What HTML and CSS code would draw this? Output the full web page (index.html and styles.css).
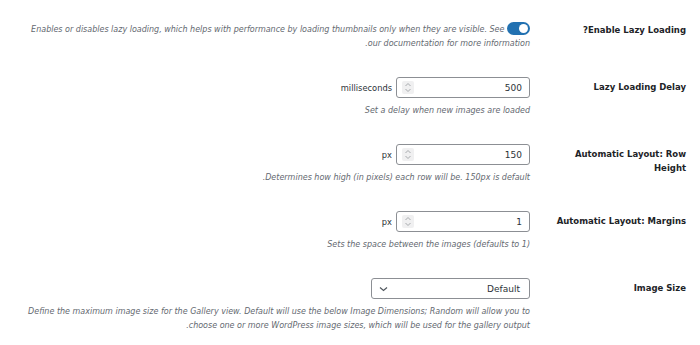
FILE: index.html
```html
<!DOCTYPE html>
<html lang="en" dir="rtl">
<head>
  <meta charset="UTF-8">
  <meta name="viewport" content="width=device-width, initial-scale=1.0">
  <title>Gallery settings</title>
  <link rel="stylesheet" href="styles.css">
</head>
<body>
  <div class="settings">
    <div class="row">
      <div class="label">Enable Lazy Loading?</div>
      <div class="field">
        <p class="desc first"><span class="toggle"><span class="knob"></span></span> Enables or disables lazy loading, which helps with performance by loading thumbnails only when they are visible. See our documentation for more information.</p>
      </div>
    </div>

    <div class="row has-input">
      <div class="label">Lazy Loading Delay</div>
      <div class="field">
        <div class="control">
          <div class="num">
            <span class="val">500</span>
            <span class="spin"><svg width="8" height="11" viewBox="0 0 8 11"><path d="M1.5 4 L4 1.5 L6.5 4 M1.5 7 L4 9.5 L6.5 7" fill="none" stroke="#a7aaad" stroke-width="1"/></svg></span>
          </div>
          <span class="unit">milliseconds</span>
        </div>
        <p class="desc">Set a delay when new images are loaded</p>
      </div>
    </div>

    <div class="row has-input">
      <div class="label">Automatic Layout: Row Height</div>
      <div class="field">
        <div class="control">
          <div class="num">
            <span class="val">150</span>
            <span class="spin"><svg width="8" height="11" viewBox="0 0 8 11"><path d="M1.5 4 L4 1.5 L6.5 4 M1.5 7 L4 9.5 L6.5 7" fill="none" stroke="#a7aaad" stroke-width="1"/></svg></span>
          </div>
          <span class="unit">px</span>
        </div>
        <p class="desc">Determines how high (in pixels) each row will be. 150px is default.</p>
      </div>
    </div>

    <div class="row has-input">
      <div class="label">Automatic Layout: Margins</div>
      <div class="field">
        <div class="control">
          <div class="num">
            <span class="val">1</span>
            <span class="spin"><svg width="8" height="11" viewBox="0 0 8 11"><path d="M1.5 4 L4 1.5 L6.5 4 M1.5 7 L4 9.5 L6.5 7" fill="none" stroke="#a7aaad" stroke-width="1"/></svg></span>
          </div>
          <span class="unit">px</span>
        </div>
        <p class="desc">Sets the space between the images (defaults to 1)</p>
      </div>
    </div>

    <div class="row has-input">
      <div class="label">Image Size</div>
      <div class="field">
        <div class="select">
          <span class="val">Default</span>
          <svg width="9" height="6" viewBox="0 0 9 6"><path d="M1 1.5 L4.5 4.5 L8 1.5" fill="none" stroke="#50575e" stroke-width="1.2"/></svg>
        </div>
        <p class="desc">Define the maximum image size for the Gallery view. Default will use the below Image Dimensions; Random will allow you to choose one or more WordPress image sizes, which will be used for the gallery output.</p>
      </div>
    </div>
  </div>
</body>
</html>
```

FILE: styles.css
```css
body {
  margin: 0;
  background: #fff;
  color: #1d2327;
  font-family: "DejaVu Sans", sans-serif;
}

.settings {
  padding: 10px 14px 0 10px;
}

.row {
  display: flex;
}

.label {
  width: 136px;
  flex: none;
  padding: 13px 0 13px 10px;
  font-size: 8.5px;
  font-weight: bold;
  line-height: 14px;
}

.has-input .label {
  padding-top: 16px;
}

.field {
  flex: 1;
  padding: 13px 10px;
}

.desc {
  margin: 6px 0 0;
  font-size: 8px;
  font-style: italic;
  line-height: 14px;
  color: #646970;
}

.desc.first {
  margin: 0;
}

.toggle {
  display: inline-block;
  vertical-align: middle;
  width: 23px;
  height: 13px;
  border-radius: 7px;
  background: #2271b1;
  position: relative;
  margin-top: -2px;
}

.knob {
  position: absolute;
  right: 2px;
  top: 2px;
  width: 9px;
  height: 9px;
  border-radius: 50%;
  background: #fff;
}

.control {
  display: flex;
  align-items: center;
  gap: 4px;
}

.num,
.select {
  box-sizing: border-box;
  height: 21px;
  border: 1px solid #8c8f94;
  border-radius: 3px;
  display: flex;
  align-items: center;
  justify-content: space-between;
  font-size: 9px;
  color: #2c3338;
}

.num {
  width: 134px;
  padding: 0 7px 0 5px;
}

.select {
  width: 159px;
  padding: 0 9px 0 7px;
}

.spin {
  width: 12px;
  height: 13px;
  background: #f0f0f1;
  border-radius: 2px;
  display: flex;
  align-items: center;
  justify-content: center;
}

.unit {
  font-size: 8.3px;
  color: #2c3338;
}
```
